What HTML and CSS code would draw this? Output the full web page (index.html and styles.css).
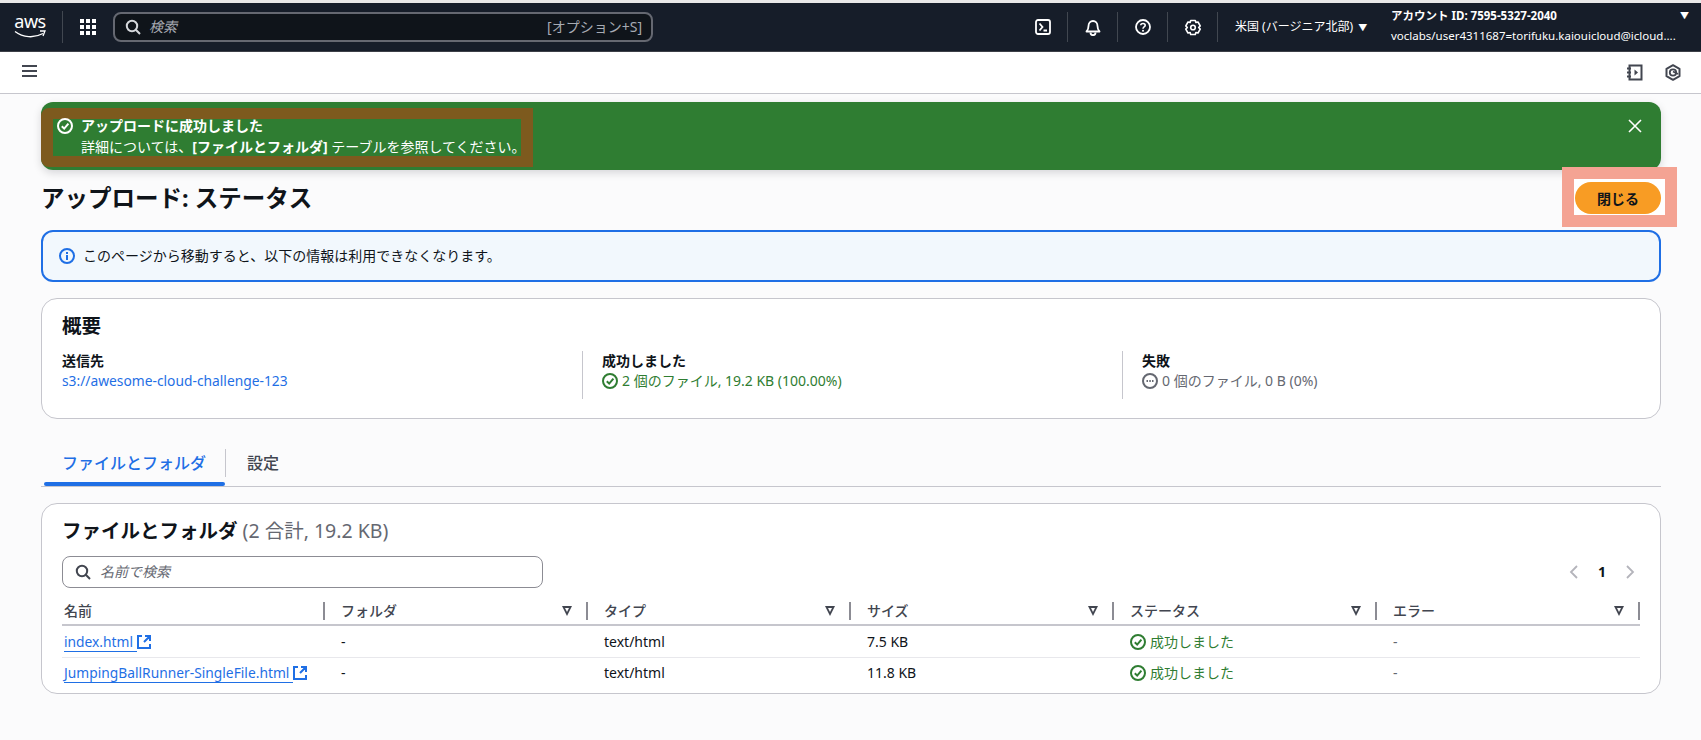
FILE: index.html
```html
<!DOCTYPE html>
<html lang="ja">
<head>
    <meta charset="UTF-8">
    <meta name="viewport" content="width=device-width, initial-scale=1.0">
    <title>アップロード: ステータス</title>
    <link rel="stylesheet" href="styles.css">
</head>
<body>
    <svg class="defs" width="0" height="0">
        <symbol id="check" viewBox="0 0 16 16"><circle cx="8" cy="8" r="7" fill="none" stroke="currentColor" stroke-width="2"/><path d="M4.800 8.200 7.200 10.600 11.400 5.600" fill="none" stroke="currentColor" stroke-width="2"/></symbol>
        <symbol id="search" viewBox="0 0 16 16"><circle cx="7" cy="7" r="5.200" fill="none" stroke="currentColor" stroke-width="2"/><path d="M10.800 10.800 15 15" fill="none" stroke="currentColor" stroke-width="2"/></symbol>
        <symbol id="external" viewBox="0 0 14 14"><path d="M5 1H1v12h12V9M8 1h5v5M13 1 7 7" fill="none" stroke="currentColor" stroke-width="2"/></symbol>
    </svg>

    <!-- Barra superior -->
    <header class="topnav">
        <div class="logo">
            <span class="logo-text">aws</span>
            <svg class="logo-smile" width="32" height="8" viewBox="0 0 32 8"><path d="M1 1.500c8 6 19 7 28 2" fill="none" stroke="#fff" stroke-width="1.400"/><path d="M26 1h5l-2 5" fill="none" stroke="#fff" stroke-width="1.300"/></svg>
        </div>
        <div class="waffle"><i></i><i></i><i></i><i></i><i></i><i></i><i></i><i></i><i></i></div>
        <div class="nav-search">
            <svg class="nav-search-icon" width="16" height="16"><use href="#search"/></svg>
            <span class="nav-search-text">検索</span>
            <span class="nav-search-key">[オプション+S]</span>
        </div>
        <div class="nav-right">
            <div class="nav-icon">
                <svg width="16" height="16" viewBox="0 0 16 16"><rect x="1" y="1" width="14" height="14" rx="2" fill="none" stroke="#fff" stroke-width="1.800"/><path d="M4.500 4.500 7.500 8 4.500 11.500M8.500 11.500H12" fill="none" stroke="#fff" stroke-width="1.800"/></svg>
            </div>
            <div class="nav-icon">
                <svg width="16" height="17" viewBox="0 0 16 17"><path d="M1.500 12.500c1.500-1.500 2-3 2-5.500 0-3 2-5 4.500-5s4.500 2 4.500 5c0 2.500.5 4 2 5.500z" fill="none" stroke="#fff" stroke-width="1.800" stroke-linejoin="round"/><path d="M5.500 13.500c0 3.500 5 3.500 5 0" fill="none" stroke="#fff" stroke-width="1.800"/></svg>
            </div>
            <div class="nav-icon">
                <svg width="16" height="16" viewBox="0 0 16 16"><circle cx="8" cy="8" r="7" fill="none" stroke="#fff" stroke-width="1.800"/><path d="M5.800 6.200C5.800 3.900 10.200 3.900 10.200 6.300 10.200 7.900 8 7.900 8 9.700" fill="none" stroke="#fff" stroke-width="1.600"/><circle cx="8" cy="11.800" r="1" fill="#fff"/></svg>
            </div>
            <div class="nav-icon">
                <svg width="16" height="17" viewBox="0 0 16 17"><path d="M5.700 1.500h4.600l.6 2 2.100-.5 2.200 3.900-1.500 1.600 1.500 1.600-2.200 3.900-2.100-.5-.6 2H5.700l-.6-2-2.100.5L.8 10.100l1.500-1.600L.8 6.900 3 3l2.100.5z" fill="none" stroke="#fff" stroke-width="1.600" stroke-linejoin="round"/><circle cx="8" cy="8.500" r="2.300" fill="none" stroke="#fff" stroke-width="1.600"/></svg>
            </div>
            <div class="region">米国 (バージニア北部) <span class="caret">▼</span></div>
            <div class="account">
                <div class="account-id">アカウント ID: 7595-5327-2040</div>
                <div class="account-user">voclabs/user4311687=torifuku.kaiouicloud@icloud....</div>
                <span class="account-caret">▼</span>
            </div>
        </div>
    </header>

    <!-- Barra secundaria -->
    <div class="subnav">
        <div class="burger"><i></i><i></i><i></i></div>
        <div class="subnav-icons">
            <svg width="17" height="17" viewBox="0 0 17 17"><path d="M3.500 1.500h12v14h-12zM1 4.500h4M1 8.500h4M1 12.500h4" fill="none" stroke="#424650" stroke-width="2"/><path d="M8.500 5.500 12 8.500 8.500 11.500z" fill="#424650"/></svg>
            <svg width="16" height="17" viewBox="0 0 16 17"><path d="M8 1.200 14.500 4.800V12.200L8 15.800 1.500 12.200V4.800z" fill="none" stroke="#424650" stroke-width="2" stroke-linejoin="round"/><circle cx="8" cy="8.500" r="3.200" fill="none" stroke="#424650" stroke-width="1.800"/><path d="M8 7.500 13 10" stroke="#424650" stroke-width="1.800"/></svg>
        </div>
    </div>

    <main class="content">
        <!-- Aviso verde -->
        <div class="flash">
            <div class="flash-mark"></div>
            <svg class="flash-check" width="16" height="16"><use href="#check"/></svg>
            <div class="flash-text">
                <div class="flash-title">アップロードに成功しました</div>
                <div>詳細については、<b>[ファイルとフォルダ]</b> テーブルを参照してください。</div>
            </div>
            <svg class="flash-close" width="14" height="14" viewBox="0 0 14 14"><path d="M1 1 13 13M13 1 1 13" fill="none" stroke="#fff" stroke-width="1.600"/></svg>
        </div>

        <div class="page-head">
            <h1>アップロード: ステータス</h1>
            <div class="close-wrap"><button class="close-btn">閉じる</button></div>
        </div>

        <div class="info">
            <svg width="16" height="16" viewBox="0 0 16 16"><circle cx="8" cy="8" r="7" fill="none" stroke="#1f6fe5" stroke-width="2"/><path d="M8 7v5M8 4v2" fill="none" stroke="#1f6fe5" stroke-width="2"/></svg>
            <span>このページから移動すると、以下の情報は利用できなくなります。</span>
        </div>

        <!-- Resumen -->
        <section class="card summary">
            <h2>概要</h2>
            <div class="summary-cols">
                <div class="summary-col">
                    <div class="label">送信先</div>
                    <a class="link">s3://awesome-cloud-challenge-123</a>
                </div>
                <div class="summary-col">
                    <div class="label">成功しました</div>
                    <div class="status ok"><svg width="16" height="16"><use href="#check"/></svg>2 個のファイル, 19.2 KB (100.00%)</div>
                </div>
                <div class="summary-col">
                    <div class="label">失敗</div>
                    <div class="status muted">
                        <svg width="16" height="16" viewBox="0 0 16 16"><circle cx="8" cy="8" r="7" fill="none" stroke="currentColor" stroke-width="2"/><path d="M4.500 8h1.500M7.300 8h1.500M10 8h1.500" stroke="currentColor" stroke-width="1.800"/></svg>0 個のファイル, 0 B (0%)
                    </div>
                </div>
            </div>
        </section>

        <!-- Pestañas -->
        <div class="tabs">
            <div class="tab active"><span>ファイルとフォルダ</span></div>
            <div class="tab">設定</div>
        </div>

        <!-- Tabla -->
        <section class="card files">
            <h2>ファイルとフォルダ <span class="count">(2 合計, 19.2 KB)</span></h2>
            <div class="tools">
                <div class="filter">
                    <svg width="16" height="16"><use href="#search"/></svg>
                    <span>名前で検索</span>
                </div>
                <div class="pager">
                    <svg width="10" height="16" viewBox="0 0 10 16"><path d="M8 2 2 8 8 14" fill="none" stroke="#b4b4bb" stroke-width="1.800"/></svg>
                    <b>1</b>
                    <svg width="10" height="16" viewBox="0 0 10 16"><path d="M2 2 8 8 2 14" fill="none" stroke="#b4b4bb" stroke-width="1.800"/></svg>
                </div>
            </div>
            <div class="table">
                <div class="table-header">
                    <div>名前</div>
                    <div>フォルダ<i class="sort"></i></div>
                    <div>タイプ<i class="sort"></i></div>
                    <div>サイズ<i class="sort"></i></div>
                    <div>ステータス<i class="sort"></i></div>
                    <div>エラー<i class="sort"></i></div>
                </div>
                <div class="table-row">
                    <div class="file"><a class="link">index.html</a><svg width="14" height="14"><use href="#external"/></svg></div>
                    <div>-</div>
                    <div>text/html</div>
                    <div>7.5 KB</div>
                    <div class="status ok"><svg width="16" height="16"><use href="#check"/></svg>成功しました</div>
                    <div class="dim">-</div>
                </div>
                <div class="table-row">
                    <div class="file"><a class="link">JumpingBallRunner-SingleFile.html</a><svg width="14" height="14"><use href="#external"/></svg></div>
                    <div>-</div>
                    <div>text/html</div>
                    <div>11.8 KB</div>
                    <div class="status ok"><svg width="16" height="16"><use href="#check"/></svg>成功しました</div>
                    <div class="dim">-</div>
                </div>
            </div>
        </section>
    </main>
</body>
</html>
```
FILE: styles.css
```css
* {
    box-sizing: border-box;
}
body {
    margin: 0;
    background-color: #fbfbfc;
    color: #0f141a;
    font-family: "Noto Sans", "Noto Sans CJK JP", sans-serif;
    font-size: 14px;
    line-height: 20px;
}
.defs {
    position: absolute;
}

/* Barra superior */
.topnav {
    display: flex;
    align-items: center;
    height: 52px;
    background-color: #161d29;
    border-top: 3px solid #e8e8e8;
    border-bottom: 1px solid #3d4048;
    color: #fff;
}
.logo {
    display: flex;
    flex-direction: column;
    align-items: center;
    width: 63px;
    height: 32px;
    padding-right: 2px;
    border-right: 1px solid #414750;
}
.logo-text {
    font-size: 18px;
    line-height: 20px;
    letter-spacing: -0.5px;
}
.logo-smile {
    margin-top: -1px;
}
.waffle {
    display: grid;
    grid-template-columns: repeat(3, 4px);
    gap: 2px;
    margin-left: 17px;
}
.waffle i {
    width: 4px;
    height: 4px;
    background-color: #fff;
}
.nav-search {
    display: flex;
    align-items: center;
    width: 540px;
    height: 30px;
    margin-left: 17px;
    padding: 0 9px 0 10px;
    background-color: #0f141a;
    border: 2px solid #656871;
    border-radius: 8px;
    color: #a7abb3;
}
.nav-search-icon {
    color: #d5d8dc;
}
.nav-search-text {
    margin-left: 8px;
    font-style: italic;
}
.nav-search-key {
    margin-left: auto;
}
.nav-right {
    display: flex;
    align-items: center;
    margin-left: auto;
}
.nav-icon {
    display: flex;
    align-items: center;
    justify-content: center;
    width: 50px;
    height: 30px;
    border-right: 1px solid #414750;
}
.region {
    width: 173px;
    padding-left: 17px;
    font-size: 12px;
    white-space: nowrap;
}
.caret {
    margin-left: 2px;
    font-size: 9px;
}
.account {
    position: relative;
    width: 310px;
    margin-top: -3px;
    font-size: 11.500px;
    line-height: 19.500px;
    white-space: nowrap;
}
.account-id {
    font-weight: 700;
}
.account-caret {
    position: absolute;
    top: 0;
    right: 12px;
    font-size: 9px;
}

/* Barra secundaria */
.subnav {
    display: flex;
    align-items: center;
    justify-content: space-between;
    height: 42px;
    padding: 0 20px 0 22px;
    background-color: #fff;
    border-bottom: 1px solid #c6c6cd;
}
.burger {
    display: flex;
    flex-direction: column;
    gap: 3px;
    margin-top: -3px;
}
.burger i {
    width: 15px;
    height: 2px;
    background-color: #424650;
}
.subnav-icons {
    display: flex;
    align-items: center;
    gap: 22px;
}

.content {
    padding: 8px 40px 0 41px;
}

/* Aviso verde */
.flash {
    position: relative;
    display: flex;
    height: 68px;
    padding: 13px 19px 0 16px;
    background-color: #2f7d32;
    border-radius: 12px;
    box-shadow: 0 3px 8px rgba(0, 7, 22, 0.15);
    color: #fff;
}
.flash-mark {
    position: absolute;
    left: 0;
    top: 6px;
    width: 492px;
    height: 59px;
    border: solid #7d5a1e;
    border-width: 11px 12px;
    border-radius: 8px 0 0 8px;
}
.flash-check {
    position: relative;
    margin-top: 3px;
}
.flash-text {
    position: relative;
    margin-left: 8px;
    line-height: 21px;
}
.flash-title {
    font-weight: 700;
}
.flash-close {
    margin-top: 4px;
    margin-left: auto;
}

.page-head {
    display: flex;
    align-items: center;
    justify-content: space-between;
    margin-top: 12px;
}
h1 {
    margin: 0;
    font-size: 23.500px;
    font-weight: 700;
    line-height: 32px;
}
.close-wrap {
    position: relative;
}
/* marco de anotacion alrededor del boton */
.close-wrap::before {
    content: "";
    position: absolute;
    left: -13px;
    right: -16px;
    top: -15px;
    bottom: -13px;
    background-color: #fff;
    border: solid #f4a393;
    border-width: 12px;
}
.close-btn {
    position: relative;
    display: block;
    width: 86px;
    height: 32px;
    padding: 0;
    background-color: #f89c24;
    border: none;
    border-radius: 16px;
    color: #0f141a;
    font-family: inherit;
    font-size: 14px;
    font-weight: 700;
}

.info {
    display: flex;
    align-items: center;
    gap: 8px;
    height: 52px;
    margin-top: 16px;
    padding-left: 16px;
    background-color: #f2f8fd;
    border: 2px solid #1f6fe5;
    border-radius: 12px;
}

.card {
    background-color: #fff;
    border: 1px solid #c6c6cd;
    border-radius: 16px;
}
h2 {
    margin: 0;
    font-size: 19.500px;
    font-weight: 700;
}

/* Resumen */
.summary {
    height: 121px;
    margin-top: 16px;
    padding: 17px 20px 0;
}
.summary-cols {
    display: flex;
    margin-top: 15px;
}
.summary-col {
    flex: none;
    width: 540px;
    height: 48px;
    padding-left: 19px;
    border-left: 1px solid #c6c6cd;
}
.summary-col:first-child {
    width: 520px;
    padding-left: 0;
    border-left: none;
}
.summary-col:last-child {
    flex: 1;
    width: auto;
}
.label {
    font-weight: 700;
}
.link {
    color: #1f6fe5;
    font-size: 13.800px;
}
.status {
    display: flex;
    align-items: center;
    gap: 4px;
}
.ok {
    color: #2f7d32;
}
.muted {
    color: #656871;
}

/* Pestañas */
.tabs {
    display: flex;
    align-items: flex-start;
    height: 68px;
    padding: 30px 0 0 3px;
    border-bottom: 1px solid #c6c6cd;
    font-size: 16px;
    font-weight: 500;
    color: #424650;
}
.tab {
    padding-left: 21px;
    line-height: 28px;
}
.tab.active {
    position: relative;
    width: 182px;
    height: 28px;
    padding-left: 18px;
    border-right: 1px solid #c6c6cd;
    color: #1f6fe5;
}
.tab.active::after {
    content: "";
    position: absolute;
    left: 0;
    right: 0;
    bottom: -9px;
    height: 4px;
    background-color: #1f6fe5;
    border-radius: 2px;
}

/* Tabla */
.files {
    height: 191px;
    margin-top: 16px;
    padding: 17px 20px 0;
}
.count {
    color: #656871;
    font-weight: 400;
}
.tools {
    display: flex;
    align-items: center;
    justify-content: space-between;
    margin-top: 15px;
}
.filter {
    display: flex;
    align-items: center;
    gap: 9px;
    width: 481px;
    height: 32px;
    padding-left: 12px;
    border: 1px solid #8c8c94;
    border-radius: 8px;
    color: #656871;
    font-style: italic;
}
.filter svg {
    color: #424650;
}
.pager {
    display: flex;
    align-items: center;
    gap: 19px;
    padding-right: 5px;
}
.table {
    margin-top: 12px;
}
.table-header, .table-row {
    display: grid;
    grid-template-columns: repeat(6, 1fr);
    align-items: center;
}
.table-header {
    height: 26px;
    padding-bottom: 3px;
    border-bottom: 2px solid #c6c6cd;
    color: #424650;
    font-weight: 500;
}
.table-header div {
    position: relative;
    height: 18px;
    padding-left: 16px;
    border-right: 2px solid #8c8c94;
    line-height: 18px;
}
.table-header div:first-child, .table-row div:first-child {
    padding-left: 2px;
}
.sort {
    position: absolute;
    right: 14px;
    top: 4px;
    width: 0;
    height: 0;
    border-left: 5px solid transparent;
    border-right: 5px solid transparent;
    border-top: 10px solid #424650;
}
.sort::after {
    content: "";
    position: absolute;
    left: -2px;
    top: -8px;
    border-left: 2px solid transparent;
    border-right: 2px solid transparent;
    border-top: 4px solid #fff;
}
.table-row {
    height: 32px;
}
.table-row:nth-child(2) {
    border-bottom: 1px solid #e8e8ec;
}
.table-row:nth-child(3) {
    height: 29px;
}
.table-row div {
    padding-left: 16px;
}
.file {
    display: flex;
    align-items: flex-start;
    color: #1f6fe5;
}
.file .link {
    padding-right: 4px;
    border-bottom: 1px solid #1f6fe5;
    line-height: 19px;
}
.file svg {
    margin-top: 3px;
}
.dim {
    color: #656871;
}
```
